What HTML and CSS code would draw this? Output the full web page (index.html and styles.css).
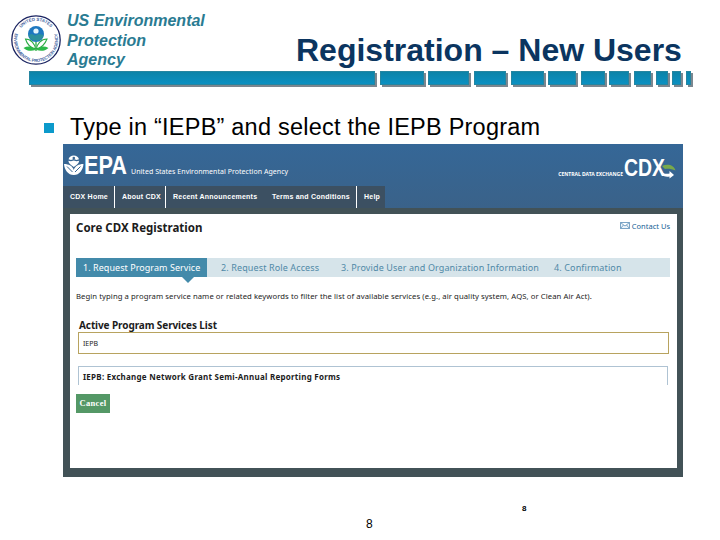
FILE: index.html
```
<!DOCTYPE html>
<html lang="en">
<head>
    <meta charset="UTF-8">
    <meta name="viewport" content="width=device-width, initial-scale=1.0">
    <title>Registration – New Users</title>
    <link rel="stylesheet" href="styles.css">
</head>
<body>
    <div class="slide">
        <header class="slide-header">
            <svg class="seal" viewBox="0 0 52 52">
                <defs>
                    <path id="ring" d="M9.3 16.4 A19.3 19.3 0 0 1 42.7 16.4"/>
                    <path id="ring-low" d="M5.3 18.5 A22 22 0 1 0 46.7 18.5"/>
                </defs>
                <circle cx="26" cy="26" r="24.2" fill="#fff" stroke="#1b2461" stroke-width="1.3"/>
                <text class="seal-text"><textPath href="#ring" startOffset="3" textLength="34">UNITED STATES</textPath></text>
                <text class="seal-text"><textPath href="#ring-low" startOffset="1" textLength="82">ENVIRONMENTAL PROTECTION AGENCY</textPath></text>
                <circle cx="26" cy="20" r="8" fill="#1e78c0"/>
                <circle cx="26" cy="17" r="2.6" fill="#e4f4fc"/>
                <path d="M18.3 21 L22 20 L25 21.5 L29 20 L33.7 21 A8 8 0 0 1 18.3 21 Z" fill="#2d8f9c"/>
                <path d="M26 28 V37" stroke="#2cab45" stroke-width="1.3"/>
                <path d="M25.5 35 C21 34 17 30 15.5 25 C21 25 25 30 25.5 35 Z M26.5 35 C31 34 35 30 37 25 C31 25 27 30 26.5 35 Z" fill="#fff" stroke="#2cab45" stroke-width="1.1"/>
                <path d="M25.5 36 C21 37.5 17 37 13.500 34 C18 31.500 23 32.500 25.500 36 Z M26.500 36 C31 37.500 35 37 38.500 34 C34 31.500 29 32.500 26.500 36 Z" fill="#2cb948"/>
            </svg>
            <div class="agency">US Environmental<br>Protection<br>Agency</div>
            <h1>Registration – New Users</h1>
        </header>

        <div class="bar">
            <i></i><i></i><i></i><i></i><i></i><i></i><i></i><i></i><i></i><i></i><i></i><i></i>
        </div>

        <div class="bullet">
            <span class="square"></span>
            <p>Type in “IEPB” and select the IEPB Program</p>
        </div>

        <div class="site">
            <div class="site-header">
                <div class="brand">
                    <svg class="epa" viewBox="0 0 68 34">
                        <path d="M5.500 11.200 A5.600 5.600 0 0 1 16 11.200 L13.500 12 L10.800 11 L8 12 Z" fill="#fff"/>
                        <path d="M5.300 12.700 L8 13.300 L10.800 12.400 L13.500 13.300 L16.200 12.700 A5.600 5.600 0 0 1 13.500 17 L10.800 19 L8 17 A5.600 5.600 0 0 1 5.300 12.700 Z" fill="#fff"/>
                        <circle cx="10.800" cy="10" r="1.300" fill="#386694"/>
                        <path d="M1 16 C6 16 9.500 18 10.800 22 C12 18 15.500 16 20.500 16 C20 22 16.500 27 10.800 27 C5 27 1.500 22 1 16 Z" fill="#fff"/>
                        <path d="M4 18.500 L9.500 24 M17.500 18.500 L12 24" stroke="#386694" stroke-width="1"/>
                        <text class="epa-text" x="21" y="26" textLength="43" lengthAdjust="spacingAndGlyphs">EPA</text>
                    </svg>
                    <span class="brand-name">United States Environmental Protection Agency</span>
                </div>
                <div class="exchange">
                    <span class="exchange-name">CENTRAL DATA EXCHANGE</span>
                    <svg class="cdx" viewBox="0 0 54 32">
                        <text class="cdx-text" x="0" y="24" textLength="41" lengthAdjust="spacingAndGlyphs">CDX</text>
                        <path d="M38 14 C43 11.500 50 12.500 51.500 18.500 C48 17 44 16.500 41 17 Z" fill="#79a94a"/>
                        <path d="M37 18 C38 21.500 42 22.500 45.500 21.500 V19 L50 23 L45.500 26.500 V24.500 C40 25.500 36 23 37 18 Z" fill="#fff"/>
                    </svg>
                </div>
            </div>
            <nav class="menu">
                <a class="home"><span>CDX Home</span></a>
                <a class="about"><span>About CDX</span></a>
                <a class="recent"><span>Recent Announcements</span></a>
                <a class="terms"><span>Terms and Conditions</span></a>
                <a class="help"><span>Help</span></a>
            </nav>
            <main class="panel">
                <div class="panel-top">
                    <h2>Core CDX Registration</h2>
                    <a class="contact">
                        <svg class="mail" viewBox="0 0 10 7"><path d="M.5 .5 H9.500 V6.500 H.5 Z M.5 .5 L5 4 L9.500 .5 M.5 6.500 L3.500 3 M9.500 6.500 L6.500 3" fill="#eef5fa" stroke="#5d8fb8" stroke-width=".8"/></svg>
                        <span>Contact Us</span>
                    </a>
                </div>
                <div class="steps">
                    <div class="step active"><span>1. Request Program Service</span></div>
                    <div class="step step-2">2. Request Role Access</div>
                    <div class="step step-3">3. Provide User and Organization Information</div>
                    <div class="step step-4">4. Confirmation</div>
                </div>
                <p class="hint">Begin typing a program service name or related keywords to filter the list of available services (e.g., air quality system, AQS, or Clean Air Act).</p>
                <h3>Active Program Services List</h3>
                <div class="search">IEPB</div>
                <div class="result">IEPB: Exchange Network Grant Semi-Annual Reporting Forms</div>
                <div class="cancel">Cancel</div>
            </main>
        </div>

        <footer>
            <span class="page-small">8</span>
            <span class="page">8</span>
        </footer>
    </div>
</body>
</html>
```
FILE: styles.css
```
* {
    margin: 0;
    padding: 0;
    box-sizing: border-box;
}

body {
    background: #fff;
    font-family: "Liberation Sans", Arial, sans-serif;
}

.slide {
    width: 720px;
    height: 540px;
    overflow: hidden;
    white-space: nowrap;
}

/* slide title */
.slide-header {
    display: flex;
    height: 71px;
    padding-left: 10px;
}

.seal {
    width: 52px;
    height: 52px;
    margin-top: 14px;
}

.seal-text {
    font-size: 4.4px;
    font-weight: bold;
    fill: #46659f;
}

.agency {
    width: 234px;
    padding: 11px 0 0 5px;
    font-size: 16px;
    font-weight: bold;
    font-style: italic;
    line-height: 19.5px;
    color: #2a7b92;
}

h1 {
    padding-top: 31px;
    font-size: 32px;
    line-height: 38px;
    color: #0b3560;
}

.bar {
    display: grid;
    grid-template-columns: 346px 44px 41px 32px 33px 28px 24px 20px 17px 12px 9px 5px;
    justify-content: space-between;
    width: 662px;
    height: 14px;
    margin-left: 29px;
}

.bar i {
    background: linear-gradient(#0c83a8, #0a90c2);
    border: 1px solid #2585a0;
    box-shadow: 2px 2px 0 #7b8790;
}

.bullet {
    display: flex;
    align-items: center;
    height: 59px;
    padding: 26px 0 0 44px;
}

.square {
    width: 10px;
    height: 10px;
    margin: 0 16px 0 0;
    background: #0c9acb;
}

.bullet p {
    margin-top: -2px;
    font-size: 23.5px;
    line-height: 26px;
    letter-spacing: .22px;
    color: #000;
}

/* embedded site */
.site {
    width: 620px;
    height: 333px;
    margin-left: 63px;
    background: linear-gradient(#356797, #3a6289 64px, #425257 64px);
    font-family: "Noto Sans", sans-serif;
}

.site-header {
    display: flex;
    justify-content: space-between;
    height: 42px;
    color: #fff;
}

.brand,
.exchange {
    display: flex;
}

.epa {
    width: 68px;
    height: 34px;
    margin-top: 4px;
}

.epa-text {
    font: bold 26px "Liberation Sans", sans-serif;
    fill: #fff;
}

.brand-name {
    margin-top: 22px;
    font-size: 7px;
    line-height: 12px;
    letter-spacing: .04px;
}

.exchange-name {
    margin-top: 25px;
    font-size: 5px;
    font-weight: bold;
    line-height: 10px;
}

.cdx {
    width: 54px;
    height: 32px;
    margin: 8px 5px 0 1px;
}

.cdx-text {
    font: bold 23px "Liberation Sans", sans-serif;
    fill: #fff;
}

.menu {
    display: flex;
    width: 322px;
    height: 22px;
    background: #3c5062;
}

.menu a {
    padding-left: 7px;
    font: bold 7px/22px "Liberation Sans", sans-serif;
    letter-spacing: .22px;
    color: #fff;
}

.home {
    width: 52px;
}

.about {
    width: 51px;
}

.recent {
    width: 99px;
}

.terms {
    width: 92px;
}

.help {
    width: 28px;
}

.menu .home,
.menu .about,
.menu .terms {
    border-right: 1px solid #fff;
}

.panel {
    width: 607px;
    height: 254px;
    margin: 6px 0 0 7px;
    padding: 0 7px 0 6px;
    background: #fff;
    color: #1c1c1c;
}

.panel-top {
    display: flex;
    justify-content: space-between;
    height: 44px;
}

h2 {
    padding-top: 7px;
    font-size: 11.5px;
    line-height: 14px;
}

.contact {
    display: flex;
    padding-top: 7px;
    font-size: 7.5px;
    line-height: 10px;
    color: #155f96;
}

.mail {
    width: 10px;
    height: 7px;
    margin: 1px 2px 0 0;
}

.steps {
    display: flex;
    height: 19px;
    background: #d6e4ea;
    font-size: 9px;
    line-height: 20px;
    letter-spacing: .12px;
    color: #5089a7;
}

.active {
    position: relative;
    width: 131px;
    padding-left: 7px;
    margin-right: 14px;
    background: #438aaa;
    letter-spacing: .05px;
    color: #fff;
}

.active::after {
    content: "";
    position: absolute;
    left: 106px;
    top: 19px;
    border: 6px solid transparent;
    border-top-color: #438aaa;
    border-bottom: 0;
}

.step-2 {
    width: 120px;
}

.step-3 {
    width: 213px;
}

.hint {
    height: 42px;
    padding-top: 13px;
    font-size: 7.7px;
    line-height: 12px;
    letter-spacing: .07px;
}

h3 {
    height: 13px;
    padding-left: 3px;
    font-size: 10px;
    line-height: 13px;
    letter-spacing: -.1px;
}

.search,
.result {
    margin-left: 2px;
    padding-left: 4px;
}

.search {
    width: 591px;
    height: 22px;
    border: 1px solid #b8a35f;
    font-size: 7px;
    line-height: 22px;
}

.result {
    width: 590px;
    height: 19px;
    margin-top: 12px;
    border: 1px solid #afc3d3;
    border-bottom: 0;
    font-size: 8px;
    font-weight: bold;
    line-height: 19px;
    letter-spacing: .25px;
}

.cancel {
    width: 34px;
    height: 19px;
    margin-top: 9px;
    background: #549866;
    font: bold 8.5px/19px "Liberation Serif", serif;
    letter-spacing: .3px;
    text-align: center;
    color: #fff;
}

/* slide numbers */
footer {
    display: flex;
    flex-direction: column;
    padding-top: 26px;
}

.page-small {
    padding-left: 522px;
    font-size: 8px;
    font-weight: bold;
    line-height: 12px;
}

.page {
    padding-left: 366px;
    font-size: 12px;
    line-height: 18px;
}
```
